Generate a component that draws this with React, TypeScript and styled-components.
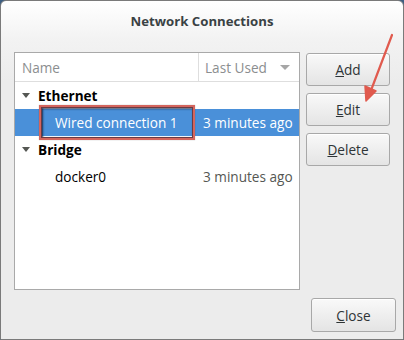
import styled, { createGlobalStyle } from "styled-components";

const GlobalStyle = createGlobalStyle`
    html, body {
        margin: 0;
        padding: 0;
        background: #3d5f82;
    }
    * {
        box-sizing: border-box;
    }
`;

const Window = styled.div`
    position: relative;
    width: 404px;
    height: 340px;
    border: 1px solid #7a7a7a;
    border-radius: 6px 6px 0 0;
    background: linear-gradient(#ffffff 0px, #f2f2f2 40px, #ececec 80px, #ececec 100%);
    font-family: "Open Sans", "DejaVu Sans", sans-serif;
    font-size: 13.6px;
    color: #2e3436;
    display: flex;
    flex-direction: column;
    overflow: hidden;
`;

const TitleBar = styled.div`
    height: 51px;
    padding-top: 11px;
    text-align: center;
    font-weight: 700;
    font-size: 13.2px;
    line-height: 18px;
    color: #3a4244;
`;

const Content = styled.div`
    display: flex;
    gap: 6px;
    padding-left: 13px;
`;

const ListBox = styled.div`
    width: 286px;
    height: 238px;
    background: #ffffff;
    border: 1px solid #a9a9a9;
    display: flex;
    flex-direction: column;
`;

const HeaderRow = styled.div`
    display: grid;
    grid-template-columns: 183px 1fr;
    height: 29px;
    border-bottom: 1px solid #dedede;
    color: #8b8e8f;
`;

const HeaderCell = styled.div<{ $divider?: boolean }>`
    display: flex;
    align-items: center;
    justify-content: space-between;
    padding: 0 8px 0 ${(p) => (p.$divider ? "6px" : "7px")};
    border-left: ${(p) => (p.$divider ? "1px solid #dedede" : "none")};
`;

const SortArrow = styled.span`
    width: 0;
    height: 0;
    border-left: 5px solid transparent;
    border-right: 5px solid transparent;
    border-top: 5px solid #a6a6a6;
    margin-right: 1px;
`;

const Row = styled.div<{ $selected?: boolean }>`
    position: relative;
    display: grid;
    grid-template-columns: 183px 1fr;
    height: 27px;
    align-items: center;
    background: ${(p) => (p.$selected ? "#4a90d9" : "transparent")};
    color: ${(p) => (p.$selected ? "#ffffff" : "#000000")};
`;

const NameCell = styled.div<{ $level: number; $bold?: boolean }>`
    display: flex;
    align-items: center;
    padding-left: ${(p) => (p.$level === 0 ? "7px" : "40px")};
    font-weight: ${(p) => (p.$bold ? 700 : 400)};
    white-space: nowrap;
`;

const Expander = styled.span`
    width: 0;
    height: 0;
    border-left: 4.5px solid transparent;
    border-right: 4.5px solid transparent;
    border-top: 5px solid #555753;
    margin-right: 8px;
`;

const TimeCell = styled.div<{ $muted?: boolean }>`
    padding-left: 5px;
    white-space: nowrap;
    color: ${(p) => (p.$muted ? "#555753" : "inherit")};
`;

const Highlight = styled.div`
    position: absolute;
    left: 24px;
    top: -4px;
    width: 156px;
    height: 35px;
    border: 2px solid #d4655d;
    box-shadow: inset 0 0 0 1px #6a3a44, inset 1px 1px 2px 1px rgba(10, 30, 60, 0.8), 0 0 1px rgba(0, 0, 0, 0.3);
    pointer-events: none;
`;

const ButtonColumn = styled.div`
    display: flex;
    flex-direction: column;
    gap: 7px;
    padding-top: 1px;
`;

const Button = styled.button`
    width: 84px;
    height: 33px;
    border: 1px solid #a8a8a8;
    border-radius: 3px;
    background: linear-gradient(#f9f9f9, #e4e4e4);
    font-family: "Open Sans", "DejaVu Sans", sans-serif;
    font-size: 13.6px;
    color: #2e3436;
    padding: 0;
    box-shadow: inset 0 1px 0 #ffffff;
`;

const Footer = styled.div`
    display: flex;
    justify-content: flex-end;
    padding: 8px 7px 0 0;
`;

const CloseButton = styled(Button)`
    width: 85px;
    height: 34px;
`;

const Arrow = styled.svg`
    position: absolute;
    left: 358px;
    top: 28px;
`;

function Mnemonic({ label }: { label: string }) {
    return (
        <>
            <u>{label[0]}</u>
            {label.slice(1)}
        </>
    );
}

export default function App() {
    return (
        <>
            <GlobalStyle />
            <Window>
                <TitleBar>Network Connections</TitleBar>
                <Content>
                    <ListBox>
                        <HeaderRow>
                            <HeaderCell>Name</HeaderCell>
                            <HeaderCell $divider>
                                Last Used
                                <SortArrow />
                            </HeaderCell>
                        </HeaderRow>
                        <Row>
                            <NameCell $level={0} $bold>
                                <Expander />
                                Ethernet
                            </NameCell>
                        </Row>
                        <Row $selected>
                            <NameCell $level={1}>Wired connection 1</NameCell>
                            <TimeCell>3 minutes ago</TimeCell>
                            <Highlight />
                        </Row>
                        <Row>
                            <NameCell $level={0} $bold>
                                <Expander />
                                Bridge
                            </NameCell>
                        </Row>
                        <Row>
                            <NameCell $level={1}>docker0</NameCell>
                            <TimeCell $muted>3 minutes ago</TimeCell>
                        </Row>
                    </ListBox>
                    <ButtonColumn>
                        <Button><Mnemonic label="Add" /></Button>
                        <Button><Mnemonic label="Edit" /></Button>
                        <Button><Mnemonic label="Delete" /></Button>
                    </ButtonColumn>
                </Content>
                <Footer>
                    <CloseButton><Mnemonic label="Close" /></CloseButton>
                </Footer>
                <Arrow width="40" height="80" viewBox="0 0 40 80">
                    <line x1="33" y1="6" x2="11" y2="64" stroke="#e05a4e" strokeWidth="2.2" strokeLinecap="round" />
                    <polygon points="7,72 6,57 17,62" fill="#e05a4e" stroke="#e05a4e" strokeWidth="1.5" strokeLinejoin="round" />
                </Arrow>
            </Window>
        </>
    );
}
